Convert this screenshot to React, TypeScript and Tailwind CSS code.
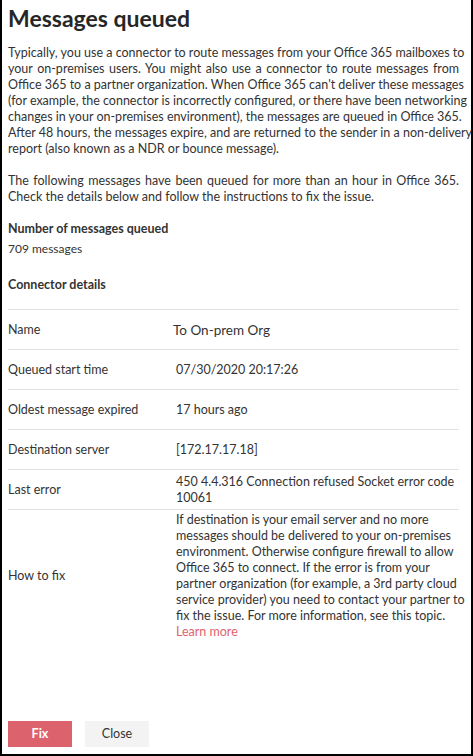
const font = { fontFamily: '"Segoe UI", Lato, sans-serif' };

// lines of the intro, kept as in the original dialog
const intro1 = [
  "Typically, you use a connector to route messages from your Office 365 mailboxes to",
  "your on-premises users. You might also use a connector to route messages from",
  "Office 365 to a partner organization. When Office 365 can't deliver these messages",
  "(for example, the connector is incorrectly configured, or there have been networking",
  "changes in your on-premises environment), the messages are queued in Office 365.",
  "After 48 hours, the messages expire, and are returned to the sender in a non-delivery",
  "report (also known as a NDR or bounce message).",
];
const intro2 = [
  "The following messages have been queued for more than an hour in Office 365.",
  "Check the details below and follow the instructions to fix the issue.",
];

const fixLines = [
  "If destination is your email server and no more",
  "messages should be delivered to your on-premises",
  "environment. Otherwise configure firewall to allow",
  "Office 365 to connect. If the error is from your",
  "partner organization (for example, a 3rd party cloud",
  "service provider) you need to contact your partner to",
  "fix the issue. For more information, see this topic.",
];

function Justified({ lines }: { lines: string[] }) {
  return (
    <p>
      {lines.map((l, i) => (
        <span
          key={i}
          className={`block whitespace-nowrap ${i < lines.length - 1 ? "[text-align-last:justify]" : ""}`}
        >
          {l}
        </span>
      ))}
    </p>
  );
}

const rows: { label: string; value: React.ReactNode; big?: boolean }[] = [
  { label: "Name", value: "To On-prem Org", big: true },
  { label: "Queued start time", value: "07/30/2020 20:17:26" },
  { label: "Oldest message expired", value: "17 hours ago" },
  { label: "Destination server", value: "[172.17.17.18]" },
  {
    label: "Last error",
    value: (
      <>
        <span className="block">450 4.4.316 Connection refused Socket error code</span>
        <span className="block">10061</span>
      </>
    ),
  },
  {
    label: "How to fix",
    value: (
      <>
        {fixLines.map((l) => (
          <span key={l} className="block whitespace-nowrap">
            {l}
          </span>
        ))}
        <a href="#" className="block text-[#e0626e]">
          Learn more
        </a>
      </>
    ),
  },
];

export default function App() {
  return (
    <div
      style={font}
      className="w-[473px] h-[756px] bg-white border-l-2 border-r-2 border-b-2 border-black flex flex-col text-[#333]"
    >
      <div className="pl-[6px] pr-[12px]">
        <h1 className="text-[23px] font-bold leading-[30px] pt-[3px] text-[#262626]">Messages queued</h1>

        {/* Intro */}
        <div className="mt-[12px] text-[12.5px] leading-[16px] text-justify">
          <Justified lines={intro1} />
          <div className="mt-[16px]">
            <Justified lines={intro2} />
          </div>
        </div>

        <div className="mt-[16px] text-[12.5px] leading-[16px] font-bold">Number of messages queued</div>
        <div className="mt-[4px] text-[12px] leading-[16px]">709 messages</div>

        <div className="mt-[20px] text-[12.5px] leading-[16px] font-bold">Connector details</div>

        {/* Details table */}
        <div className="mt-[16px] border-t border-[#e1e1e1] text-[12.5px] leading-[16px]">
          {rows.map((r, i) => (
            <div
              key={r.label}
              className={`flex items-center min-h-[40px] py-[2px] ${
                i < rows.length - 1 ? "border-b border-[#e1e1e1]" : ""
              }`}
            >
              <div className="w-[168px] shrink-0">{r.label}</div>
              <div className={`flex-1 ${r.big ? "text-[13.5px] -ml-[3px]" : ""}`}>{r.value}</div>
            </div>
          ))}
        </div>
      </div>

      {/* Footer buttons */}
      <div className="mt-auto flex gap-[13px] pl-[6px] pb-[7px]">
        <button className="w-[64px] h-[26px] bg-[#dc626d] text-white text-[12.5px] font-bold">Fix</button>
        <button className="w-[64px] h-[26px] bg-[#f3f3f3] text-[#333] text-[12.5px]">Close</button>
      </div>
    </div>
  );
}
